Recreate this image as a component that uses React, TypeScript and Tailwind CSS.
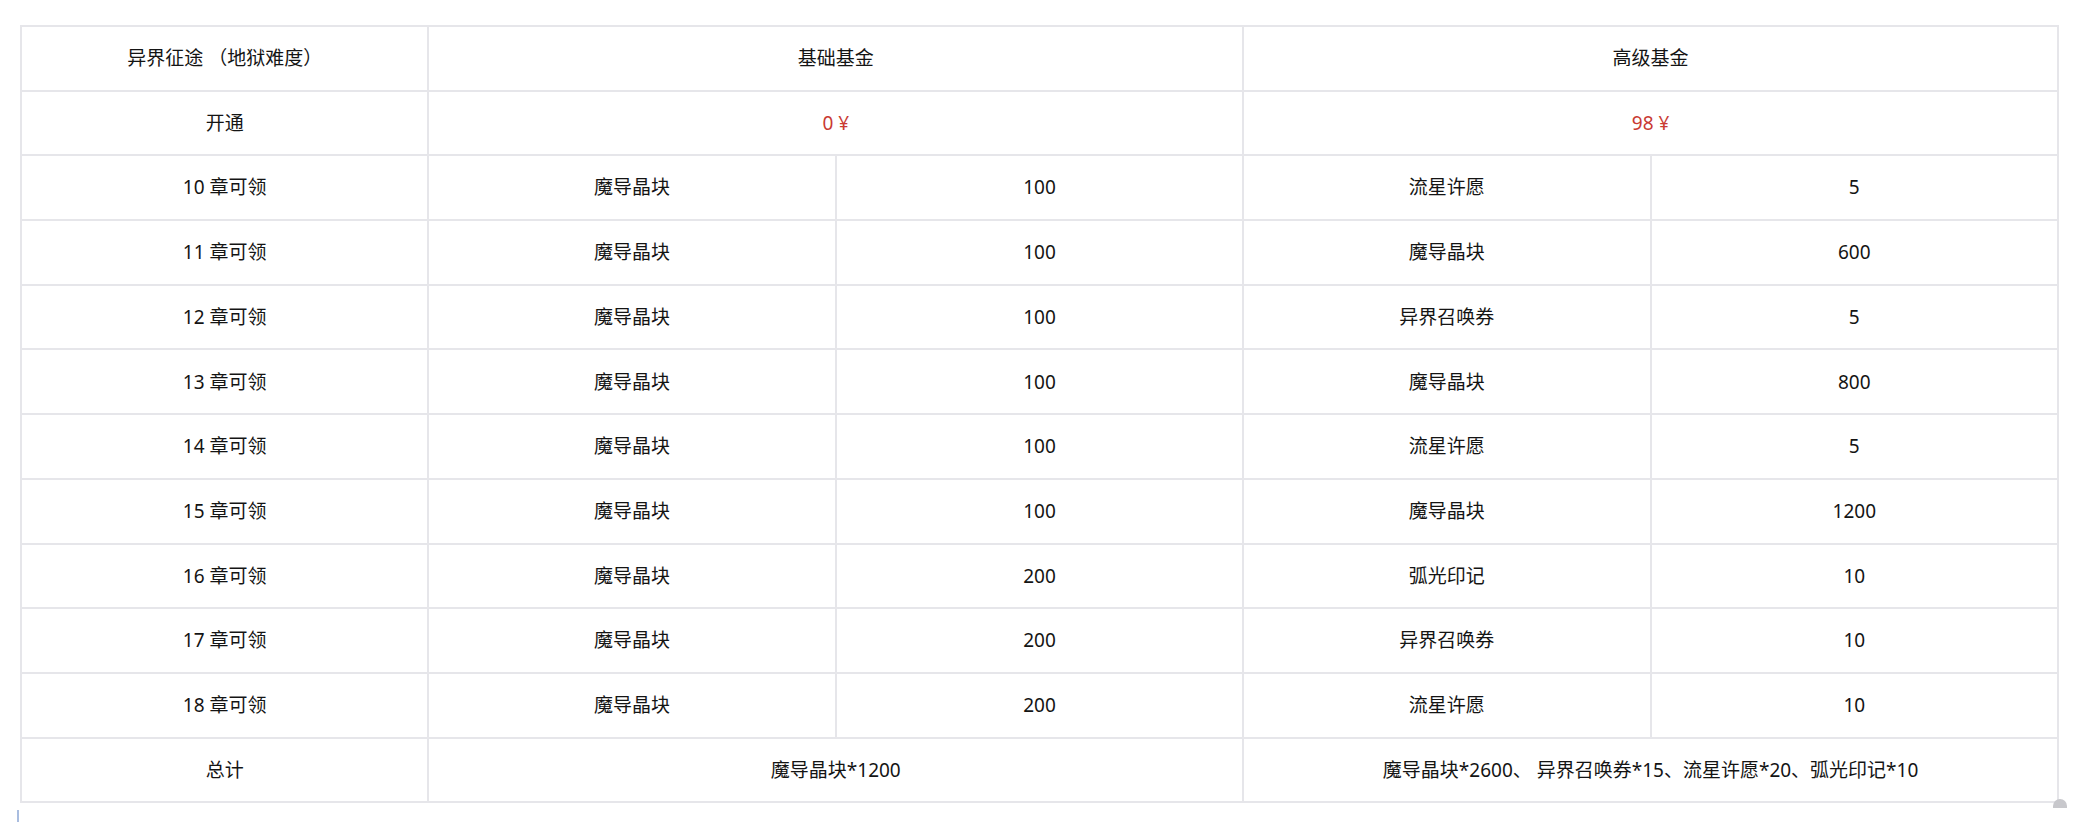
const rows: [string, string, string, string, string][] = [
  ["10 章可领", "魔导晶块", "100", "流星许愿", "5"],
  ["11 章可领", "魔导晶块", "100", "魔导晶块", "600"],
  ["12 章可领", "魔导晶块", "100", "异界召唤券", "5"],
  ["13 章可领", "魔导晶块", "100", "魔导晶块", "800"],
  ["14 章可领", "魔导晶块", "100", "流星许愿", "5"],
  ["15 章可领", "魔导晶块", "100", "魔导晶块", "1200"],
  ["16 章可领", "魔导晶块", "200", "弧光印记", "10"],
  ["17 章可领", "魔导晶块", "200", "异界召唤券", "10"],
  ["18 章可领", "魔导晶块", "200", "流星许愿", "10"],
];

const cell = "border-2 border-[#e6e6ea] h-[64.7px] p-0 text-center align-middle";

export default function App() {
  return (
    <div className="relative w-[2092px] h-[822px] bg-white text-[#141414] text-[19px] font-['Noto_Sans','Noto_Sans_CJK_SC',sans-serif]">
      <div className="pl-[20px] pt-[25px]">
        <table className="w-[2039px] table-fixed border-collapse">
          <tbody>
            <tr>
              <td className={cell}>异界征途 （地狱难度）</td>
              <td className={cell} colSpan={2}>基础基金</td>
              <td className={cell} colSpan={2}>高级基金</td>
            </tr>
            <tr>
              <td className={cell}>开通</td>
              <td className={`${cell} text-[#c93a32]`} colSpan={2}>0 ¥</td>
              <td className={`${cell} text-[#c93a32]`} colSpan={2}>98 ¥</td>
            </tr>
            {rows.map((r) => (
              <tr key={r[0]}>
                {r.map((v, i) => (
                  <td key={i} className={cell}>{v}</td>
                ))}
              </tr>
            ))}
            <tr>
              <td className={cell}>总计</td>
              <td className={cell} colSpan={2}>魔导晶块*1200</td>
              <td className={cell} colSpan={2}>魔导晶块*2600、 异界召唤券*15、流星许愿*20、弧光印记*10</td>
            </tr>
          </tbody>
        </table>
      </div>
      <div className="absolute left-[17px] top-[810px] w-[2px] h-[12px] bg-[#a9bde0]" />
      <div className="absolute left-[2053px] top-[799px] w-[14px] h-[9px] rounded-t-full bg-[#c8c8cc]" />
    </div>
  );
}
